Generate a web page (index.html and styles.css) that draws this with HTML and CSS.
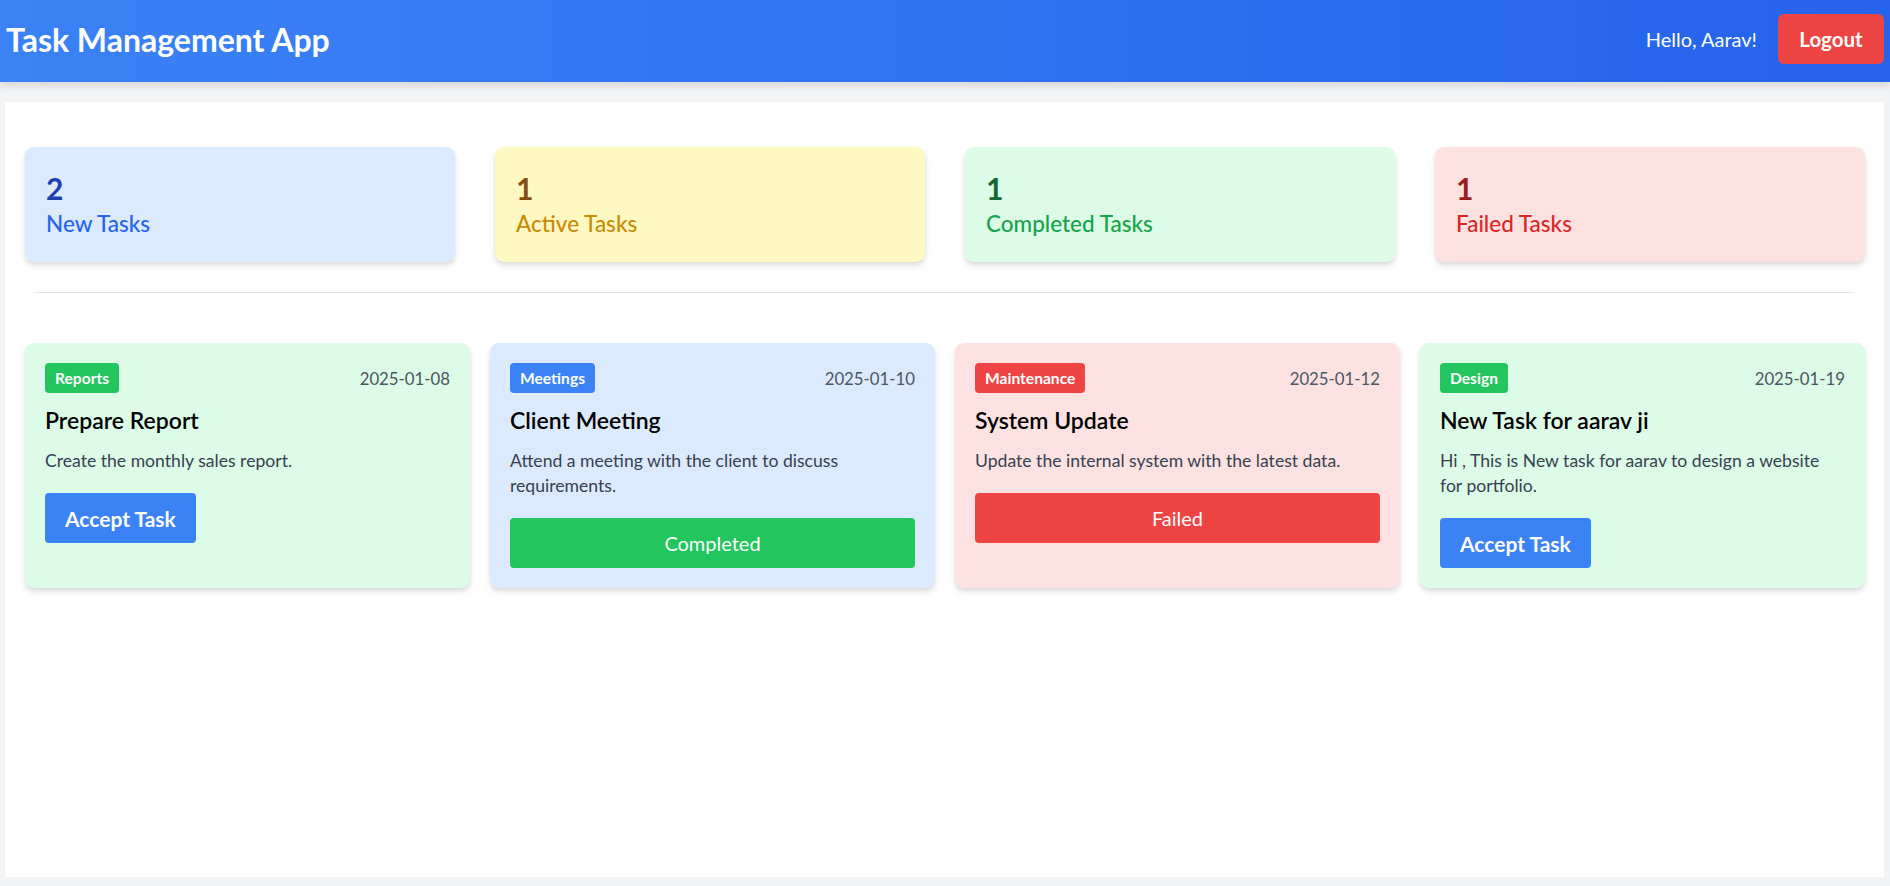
FILE: index.html
```html
<!DOCTYPE html>
<html lang="en">
<head>
<meta charset="utf-8">
<title>Task Management App</title>
<link rel="stylesheet" href="styles.css">
</head>
<body>
<header class="topbar">
  <h1 class="brand">Task Management App</h1>
  <div class="user">
    <span class="hello">Hello, Aarav!</span>
    <button class="logout">Logout</button>
  </div>
</header>
<main class="panel">
  <section class="stats">
    <div class="stat stat-blue"><div class="stat-num">2</div><div class="stat-label">New Tasks</div></div>
    <div class="stat stat-yellow"><div class="stat-num">1</div><div class="stat-label">Active Tasks</div></div>
    <div class="stat stat-green"><div class="stat-num">1</div><div class="stat-label">Completed Tasks</div></div>
    <div class="stat stat-red"><div class="stat-num">1</div><div class="stat-label">Failed Tasks</div></div>
  </section>
  <hr class="divider">
  <section class="tasks">
    <article class="task task-green">
      <div class="task-top"><span class="badge badge-green">Reports</span><span class="date">2025-01-08</span></div>
      <h2 class="task-title">Prepare Report</h2>
      <p class="task-desc">Create the monthly sales report.</p>
      <div class="task-actions"><button class="btn-accept">Accept Task</button></div>
    </article>
    <article class="task task-blue">
      <div class="task-top"><span class="badge badge-blue">Meetings</span><span class="date">2025-01-10</span></div>
      <h2 class="task-title">Client Meeting</h2>
      <p class="task-desc">Attend a meeting with the client to discuss requirements.</p>
      <div class="task-actions"><button class="btn-status btn-completed">Completed</button></div>
    </article>
    <article class="task task-red">
      <div class="task-top"><span class="badge badge-red">Maintenance</span><span class="date">2025-01-12</span></div>
      <h2 class="task-title">System Update</h2>
      <p class="task-desc">Update the internal system with the latest data.</p>
      <div class="task-actions"><button class="btn-status btn-failed">Failed</button></div>
    </article>
    <article class="task task-green">
      <div class="task-top"><span class="badge badge-green">Design</span><span class="date">2025-01-19</span></div>
      <h2 class="task-title">New Task for aarav ji</h2>
      <p class="task-desc">Hi , This is New task for aarav to design a website for portfolio.</p>
      <div class="task-actions"><button class="btn-accept">Accept Task</button></div>
    </article>
  </section>
</main>
</body>
</html>
```
FILE: styles.css
```css
* { box-sizing: border-box; }
html, body { height: 100%; }
body {
  margin: 0;
  background: #f3f4f6;
  font-family: Lato, "Liberation Sans", sans-serif;
  display: flex;
  flex-direction: column;
}
button { font-family: inherit; border: 0; cursor: pointer; }

.topbar {
  height: 82px;
  flex: 0 0 auto;
  display: flex;
  align-items: center;
  justify-content: space-between;
  padding: 0 6px 4px 6px;
  background: linear-gradient(to right, #3b82f6, #2563eb);
  box-shadow: 0 4px 8px rgba(0, 0, 0, 0.12);
  position: relative;
  z-index: 1;
}
.brand {
  margin: 0;
  color: #fff;
  font-size: 32px;
  font-weight: 700;
}
.user { display: flex; align-items: center; gap: 21px; }
.hello { color: #fff; font-size: 20px; }
.logout {
  width: 106px;
  height: 50px;
  background: #ef4444;
  color: #fff;
  font-size: 20.5px;
  font-weight: 700;
  border-radius: 6px;
}

.panel {
  flex: 1 1 auto;
  margin: 20px 6px 9px 5px;
  background: #fff;
  padding: 45px 19px 20px 20px;
}
.stats {
  display: grid;
  grid-template-columns: repeat(4, 1fr);
  gap: 40px;
}
.stat {
  height: 115px;
  border-radius: 9px;
  padding: 23px 21px;
  box-shadow: 0 4px 6px rgba(0, 0, 0, 0.1), 0 2px 4px rgba(0, 0, 0, 0.06);
}
.stat-num { font-size: 30px; font-weight: 700; line-height: 36px; }
.stat-label { font-size: 22.5px; line-height: 32px; font-weight: 500; margin-top: 2px; }
.stat-blue { background: #dbeafe; }
.stat-blue .stat-num { color: #1e40af; }
.stat-blue .stat-label { color: #2563eb; }
.stat-yellow { background: #fef9c3; }
.stat-yellow .stat-num { color: #854d0e; }
.stat-yellow .stat-label { color: #ca8a04; }
.stat-green { background: #dcfce7; }
.stat-green .stat-num { color: #166534; }
.stat-green .stat-label { color: #16a34a; }
.stat-red { background: #fee2e2; }
.stat-red .stat-num { color: #991b1b; }
.stat-red .stat-label { color: #dc2626; }

.divider {
  border: 0;
  border-top: 1px solid #e5e7eb;
  margin: 30px 11px 50px 10px;
}

.tasks {
  display: grid;
  grid-template-columns: repeat(4, 1fr);
  gap: 20px;
}
.task {
  border-radius: 9px;
  padding: 20px;
  box-shadow: 0 4px 6px rgba(0, 0, 0, 0.1), 0 2px 4px rgba(0, 0, 0, 0.06);
  display: flex;
  flex-direction: column;
}
.task-green { background: #dcfce7; }
.task-blue { background: #dbeafe; }
.task-red { background: #fee2e2; }
.task-top {
  display: flex;
  align-items: center;
  justify-content: space-between;
  height: 30px;
}
.badge {
  height: 30px;
  line-height: 30px;
  padding: 0 10px;
  border-radius: 4px;
  color: #fff;
  font-size: 15.6px;
  font-weight: 700;
}
.badge-green { background: #22c55e; }
.badge-blue { background: #3b82f6; }
.badge-red { background: #ef4444; }
.date { color: #4b5563; font-size: 16.8px; }
.task-title {
  margin: 12px 0 0 0;
  font-size: 23px;
  line-height: 30px;
  font-weight: 600;
  color: #000;
}
.task-desc {
  margin: 13px 0 0 0;
  font-size: 17.6px;
  line-height: 25px;
  color: #374151;
}
.task-actions { margin-top: 20px; }
.btn-accept {
  height: 50px;
  padding: 0 20px;
  background: #3b82f6;
  color: #fff;
  font-size: 21px;
  font-weight: 700;
  border-radius: 4px;
}
.btn-status {
  width: 100%;
  height: 50px;
  color: #fff;
  font-size: 20px;
  border-radius: 4px;
}
.btn-completed { background: #22c55e; }
.btn-failed { background: #ef4444; }
```
